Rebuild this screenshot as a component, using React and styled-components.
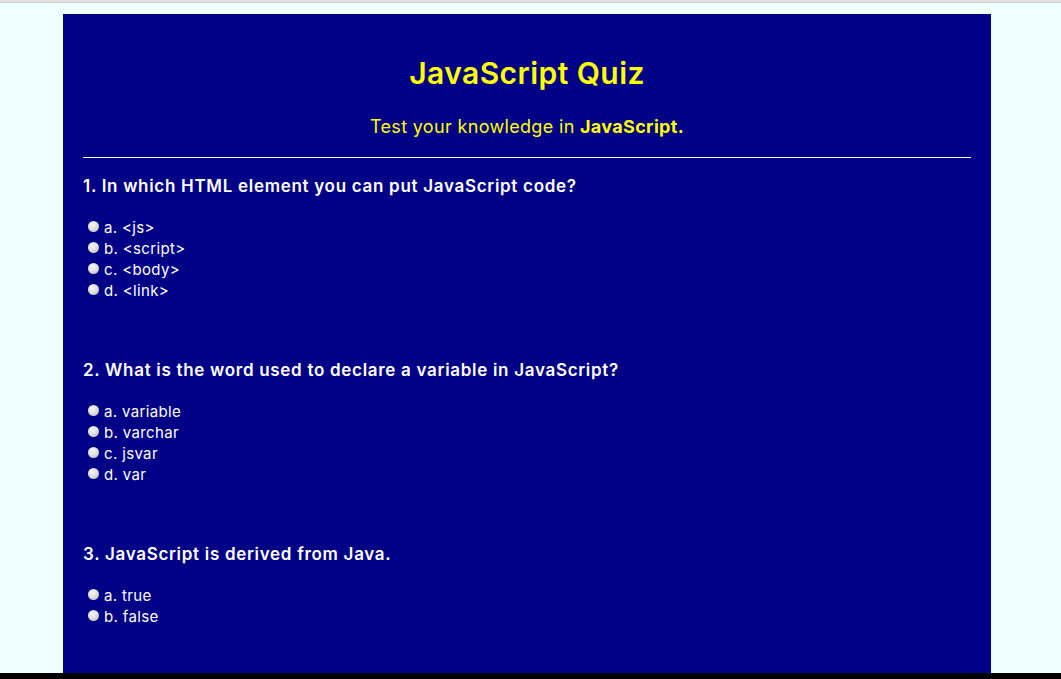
import styled, { createGlobalStyle } from "styled-components";

const questions = [
  {
    id: 1,
    text: "1. In which HTML element you can put JavaScript code?",
    options: ["a. <js>", "b. <script>", "c. <body>", "d. <link>"],
  },
  {
    id: 2,
    text: "2. What is the word used to declare a variable in JavaScript?",
    options: ["a. variable", "b. varchar", "c. jsvar", "d. var"],
  },
  {
    id: 3,
    text: "3. JavaScript is derived from Java.",
    options: ["a. true", "b. false"],
  },
];

const App = () => {
  return (
    <>
      <GlobalStyle />
      <Screen>
        <TopStrip />
        <Page>
          <QuizContainer>
            <Header>
              <Title>JavaScript Quiz</Title>
              <Subtitle>
                Test your knowledge in <strong>JavaScript.</strong>
              </Subtitle>
            </Header>
            <Divider />
            {questions.map((q) => (
              <Question key={q.id}>
                <QuestionText>{q.text}</QuestionText>
                <Options>
                  {q.options.map((opt) => (
                    <Option key={opt}>
                      <Radio type="radio" name={"q" + q.id} />
                      {opt}
                    </Option>
                  ))}
                </Options>
              </Question>
            ))}
          </QuizContainer>
        </Page>
        <BottomBar />
      </Screen>
    </>
  );
};

export default App;

const GlobalStyle = createGlobalStyle`
  html, body {
    margin: 0;
    padding: 0;
    background: #f0ffff;
    font-family: Inter, "Open Sans", sans-serif;
  }
`;

const Screen = styled.div`
  display: flex;
  flex-direction: column;
  height: 679px;
  overflow: hidden;
`;

const TopStrip = styled.div`
  height: 3px;
  background: #e4e2df;
  border-bottom: 1px solid #d6d4d1;
  box-sizing: border-box;
`;

const Page = styled.div`
  flex: 1;
  overflow: hidden;
  padding-top: 11px;
`;

const BottomBar = styled.div`
  height: 6px;
  background: #000;
`;

const QuizContainer = styled.div`
  margin-left: 63px;
  width: 928px;
  min-height: 100%;
  box-sizing: border-box;
  background: #000087;
  padding: 41px 20px 1px;
  color: #fff;
`;

const Header = styled.div`
  text-align: center;
  color: #ffff00;
`;

const Title = styled.h1`
  margin: 0;
  font-size: 30px;
  line-height: 36px;
  font-weight: 600;
  letter-spacing: 0.45px;
`;

const Subtitle = styled.p`
  margin: 25px 0 0;
  font-size: 18px;
  line-height: 22px;
  letter-spacing: 0.33px;

  strong {
    font-weight: 700;
  }
`;

const Divider = styled.hr`
  margin: 19px 0 0;
  border: none;
  border-top: 1px solid #ffffff;
`;

const Question = styled.div`
  margin-top: 17px;
  margin-bottom: 58px;
`;

const QuestionText = styled.h3`
  margin: 0;
  font-size: 17px;
  line-height: 22px;
  font-weight: 600;
  letter-spacing: 0.7px;
`;

const Options = styled.div`
  margin-top: 20px;
  display: flex;
  flex-direction: column;
`;

const Option = styled.label`
  display: flex;
  align-items: center;
  font-size: 15px;
  line-height: 21px;
  letter-spacing: 0.35px;
`;

const Radio = styled.input`
  appearance: none;
  width: 11px;
  height: 11px;
  margin: 0 5px 0 5px;
  border-radius: 50%;
  background: radial-gradient(circle at 40% 35%, #f6f6f6 0%, #e0e0e0 45%, #b0b0b0 100%);
  box-shadow: 0 0 0 0.5px rgba(0, 0, 0, 0.25);
  position: relative;
  top: -1px;
`;
